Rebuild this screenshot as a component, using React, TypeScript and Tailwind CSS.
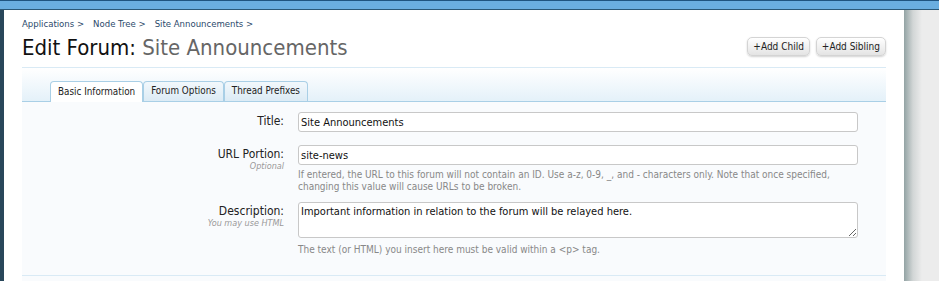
import React from "react";

const tabs = ["Basic Information", "Forum Options", "Thread Prefixes"];

function Label({ text, hint }: { text: string; hint?: string }) {
  return (
    <div className="w-[262px] shrink-0 text-right">
      <div className="-mt-[1px] text-[12px] leading-[20px] text-[#222]">{text}</div>
      {hint && (
        <div className="-mt-[3px] text-[9px] leading-[11px] italic text-[#999]">
          {hint}
        </div>
      )}
    </div>
  );
}

export default function App() {
  const [active, setActive] = React.useState(0);

  return (
    <div className="flex h-[281px] w-[939px] flex-col overflow-hidden bg-[#ececec] font-['DejaVu_Sans_Condensed','DejaVu_Sans',sans-serif] [font-stretch:condensed]">
      <div className="h-[10px] shrink-0 border-t border-b border-t-[#1f5480] border-b-[#2a5878] bg-[#6aaee0]" />
      <div className="flex flex-1">
        <div className="w-[4px] shrink-0 bg-[#29475a]" />
        <div className="flex w-[900px] shrink-0 flex-col bg-white px-[18px] pt-[7px]">
          <nav className="flex gap-[9px] text-[9.5px] leading-[14px] text-[#2b4a6b]">
            <span>Applications &gt;</span>
            <span>Node Tree &gt;</span>
            <span>Site Announcements &gt;</span>
          </nav>
          <div className="mt-[3px] flex items-center justify-between border-b border-[#d9eaf5] pb-[5px]">
            <h1 className="text-[22px] leading-[28px] text-[#111]">
              Edit Forum: <span className="text-[#666]">Site Announcements</span>
            </h1>
            <div className="mt-[-4px] flex gap-[6px]">
              {["+Add Child", "+Add Sibling"].map((b) => (
                <button
                  key={b}
                  className="h-[19px] rounded-[5px] border border-[#d4d4d4] bg-gradient-to-b from-white to-[#e4e4e4] px-[5px] text-[10px] leading-[17px] text-[#222] shadow-[0_1px_2px_rgba(0,0,0,0.18)]"
                >
                  {b}
                </button>
              ))}
            </div>
          </div>
          <div className="flex h-[34px] items-end border-b border-[#a9cfe6] bg-gradient-to-b from-white to-[#e4f1f9] pl-[28px]">
            {tabs.map((t, i) => (
              <button
                key={t}
                onClick={() => setActive(i)}
                className={
                  i === active
                    ? "-mb-[1px] h-[21px] rounded-t-[4px] border border-b-0 border-[#a9cfe6] bg-white px-[7px] text-[9.8px] text-[#222]"
                    : "h-[20px] rounded-t-[4px] border border-b-0 border-[#a9cfe6] bg-gradient-to-b from-[#f2f8fc] to-[#dcebf5] px-[7px] text-[9.8px] text-[#222]"
                }
              >
                {t}
              </button>
            ))}
          </div>
          <div className="flex flex-1 flex-col bg-[#f9fbfd] pt-[10px]">
            <div className="flex gap-[14px]">
              <Label text="Title:" />
              <input
                defaultValue="Site Announcements"
                className="h-[20px] w-[560px] rounded-[3px] border border-[#c8c8c8] bg-white px-[2px] text-[11px] text-[#111] outline-none"
              />
            </div>
            <div className="mt-[13px] flex gap-[14px]">
              <Label text="URL Portion:" hint="Optional" />
              <div className="w-[560px]">
                <input
                  defaultValue="site-news"
                  className="block h-[20px] w-full rounded-[3px] border border-[#c8c8c8] bg-white px-[2px] text-[11px] text-[#111] outline-none"
                />
                <p className="mt-[4px] text-[10px] leading-[12px] text-[#888]">
                  If entered, the URL to this forum will not contain an ID. Use a-z, 0-9, _, and - characters only. Note that once specified,
                  <br />
                  changing this value will cause URLs to be broken.
                </p>
              </div>
            </div>
            <div className="mt-[9px] flex gap-[14px]">
              <Label text="Description:" hint="You may use HTML" />
              <div className="w-[560px]">
                <textarea
                  defaultValue="Important information in relation to the forum will be relayed here."
                  className="block h-[36px] w-full resize-y rounded-[3px] border border-[#c8c8c8] bg-white px-[2px] py-[1px] text-[11px] leading-[16px] text-[#111] outline-none"
                />
                <p className="mt-[6px] text-[10px] leading-[12px] text-[#888]">
                  The text (or HTML) you insert here must be valid within a &lt;p&gt; tag.
                </p>
              </div>
            </div>
            <div className="mt-[19px] border-b border-[#d9eaf5]" />
          </div>
        </div>
        <div className="w-[18px] shrink-0 bg-gradient-to-r from-[#93a3a4] via-[#d2d6d6] to-[#ececec]" />
        <div className="flex-1 bg-[#ececec]" />
      </div>
    </div>
  );
}
